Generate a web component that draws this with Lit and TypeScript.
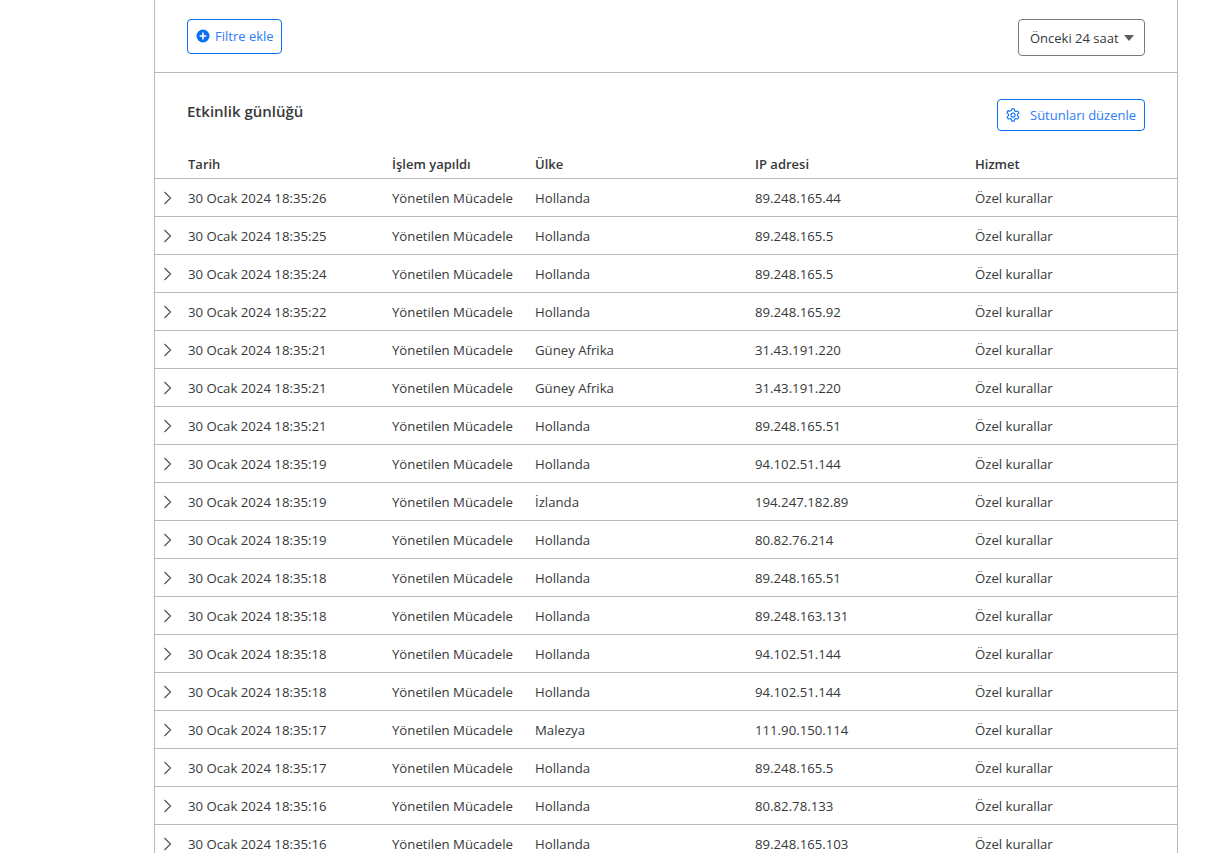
import { LitElement, html, css } from "lit";
import { customElement } from "lit/decorators.js";

const ACTION = "Yönetilen Mücadele";
const SERVICE = "Özel kurallar";

const rows = [
  ["30 Ocak 2024 18:35:26", "Hollanda", "89.248.165.44"],
  ["30 Ocak 2024 18:35:25", "Hollanda", "89.248.165.5"],
  ["30 Ocak 2024 18:35:24", "Hollanda", "89.248.165.5"],
  ["30 Ocak 2024 18:35:22", "Hollanda", "89.248.165.92"],
  ["30 Ocak 2024 18:35:21", "Güney Afrika", "31.43.191.220"],
  ["30 Ocak 2024 18:35:21", "Güney Afrika", "31.43.191.220"],
  ["30 Ocak 2024 18:35:21", "Hollanda", "89.248.165.51"],
  ["30 Ocak 2024 18:35:19", "Hollanda", "94.102.51.144"],
  ["30 Ocak 2024 18:35:19", "İzlanda", "194.247.182.89"],
  ["30 Ocak 2024 18:35:19", "Hollanda", "80.82.76.214"],
  ["30 Ocak 2024 18:35:18", "Hollanda", "89.248.165.51"],
  ["30 Ocak 2024 18:35:18", "Hollanda", "89.248.163.131"],
  ["30 Ocak 2024 18:35:18", "Hollanda", "94.102.51.144"],
  ["30 Ocak 2024 18:35:18", "Hollanda", "94.102.51.144"],
  ["30 Ocak 2024 18:35:17", "Malezya", "111.90.150.114"],
  ["30 Ocak 2024 18:35:17", "Hollanda", "89.248.165.5"],
  ["30 Ocak 2024 18:35:16", "Hollanda", "80.82.78.133"],
  ["30 Ocak 2024 18:35:16", "Hollanda", "89.248.165.103"],
];

@customElement("app-root")
export class AppRoot extends LitElement {
  static styles = css`
    :host {
      display: block;
      height: 853px;
      overflow: hidden;
      background: #fff;
      font-family: "Open Sans", "Noto Sans", sans-serif;
      font-size: 13.2px;
      color: #36393a;
    }

    .panel {
      width: 1022px;
      margin-left: 154px;
      border-left: 1px solid #b9b9b9;
      border-right: 1px solid #b9b9b9;
    }

    .filters {
      height: 73px;
      box-sizing: border-box;
      padding: 19px 32px 0;
      display: flex;
      justify-content: space-between;
      align-items: flex-start;
      border-bottom: 1px solid #b9b9b9;
    }

    button {
      font: inherit;
      font-size: 13px;
      background: #fff;
      box-sizing: border-box;
      border-radius: 4px;
      display: flex;
      align-items: center;
      padding: 0;
    }

    .add {
      width: 95px;
      height: 35px;
      padding: 0 0 1px 8px;
      gap: 5px;
      border: 1px solid #0a6ff2;
      color: #2c7cf6;
    }

    .range {
      width: 127px;
      height: 37px;
      padding-left: 11px;
      gap: 5px;
      border: 1px solid #77797b;
      color: #36393a;
    }

    .caret {
      width: 0;
      height: 0;
      border-left: 5px solid transparent;
      border-right: 5px solid transparent;
      border-top: 6px solid #5b5d5f;
    }

    .head {
      height: 82px;
      box-sizing: border-box;
      padding: 26px 32px 0;
      display: flex;
      justify-content: space-between;
      align-items: flex-start;
    }

    h2 {
      margin: 2px 0 0;
      font-size: 15px;
      line-height: 20px;
      font-weight: 600;
      color: #36393a;
    }

    .columns {
      width: 148px;
      height: 32px;
      padding-left: 8px;
      gap: 10px;
      border: 1px solid #0a6ff2;
      color: #2c7cf6;
    }

    .row {
      display: grid;
      grid-template-columns: 33px 204px 143px 220px 220px 1fr;
      align-items: center;
      height: 38px;
      box-sizing: border-box;
      border-bottom: 1px solid #b9b9b9;
      white-space: nowrap;
    }

    .row.titles {
      height: 24px;
      align-items: start;
      font-size: 13px;
      font-weight: 600;
      line-height: 18px;
    }

    .chevron {
      display: flex;
      justify-content: center;
      padding-right: 9px;
    }

    svg {
      display: block;
      flex: none;
    }
  `;

  render() {
    return html`
      <div class="panel">
        <div class="filters">
          <button class="add">
            <svg width="14" height="14" viewBox="0 0 14 14">
              <circle cx="7" cy="7" r="6.5" fill="#0a6ff2" />
              <path d="M7 3.6v6.8M3.6 7h6.8" stroke="#fff" stroke-width="1.6" />
            </svg>
            Filtre ekle
          </button>
          <button class="range">Önceki 24 saat <span class="caret"></span></button>
        </div>
        <div class="head">
          <h2>Etkinlik günlüğü</h2>
          <button class="columns">
            <svg width="14" height="14" viewBox="0 0 24 24" fill="none" stroke="#0a6ff2" stroke-width="1.8" stroke-linejoin="round">
              <circle cx="12" cy="12" r="3.6" />
              <path
                d="M10 1.5h4l.8 3.3 2.1 1.2 3.2-1 2 3.5-2.4 2.3v2.4l2.4 2.3-2 3.5-3.2-1-2.1 1.2-.8 3.3h-4l-.8-3.3-2.1-1.2-3.2 1-2-3.5 2.4-2.3v-2.4L1.5 8l2-3.5 3.2 1 2.1-1.2z"
              />
            </svg>
            Sütunları düzenle
          </button>
        </div>
        <div class="row titles">
          <span></span><span>Tarih</span><span>İşlem yapıldı</span><span>Ülke</span><span>IP adresi</span><span>Hizmet</span>
        </div>
        ${rows.map(
          ([date, country, ip]) => html`
            <div class="row">
              <span class="chevron">
                <svg width="9" height="14" viewBox="0 0 9 14" fill="none" stroke="#4a4c4e" stroke-width="1.1">
                  <path d="M1.5 1l6 6-6 6" />
                </svg>
              </span>
              <span>${date}</span><span>${ACTION}</span><span>${country}</span><span>${ip}</span><span>${SERVICE}</span>
            </div>
          `
        )}
      </div>
    `;
  }
}
